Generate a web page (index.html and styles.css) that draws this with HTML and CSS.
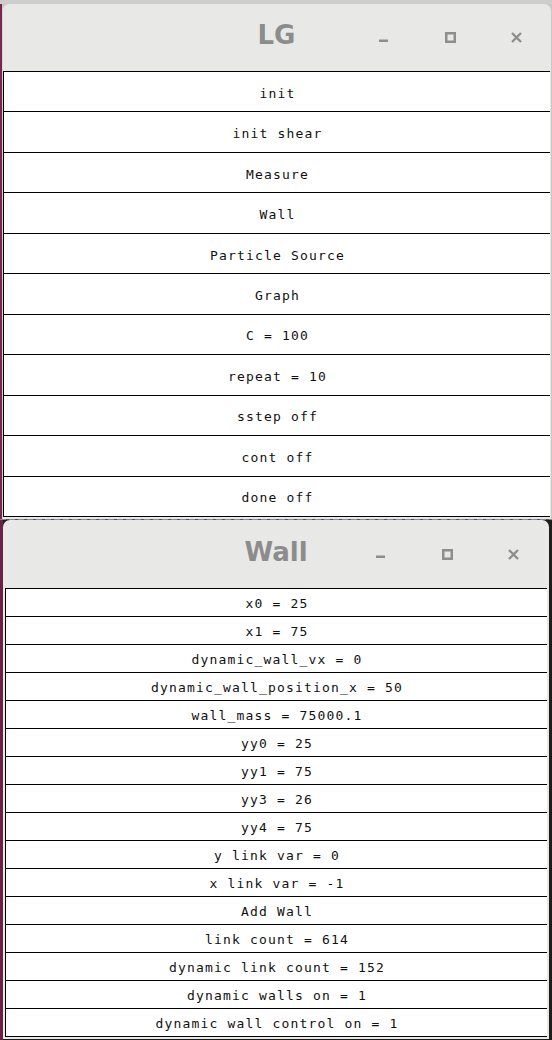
FILE: index.html
```html
<!DOCTYPE html>
<html>
<head>
<meta charset="utf-8">
<link rel="stylesheet" href="styles.css">
</head>
<body>
<div class="desktop">
  <div class="upper">
    <div class="window win-lg">
      <div class="titlebar">
        <div class="side"></div>
        <div class="title">LG</div>
        <div class="side controls">
          <span class="ctl"><svg width="10" height="10" viewBox="0 0 10 10"><rect x="0" y="6.5" width="9" height="2.5" fill="#8e8e8e"/></svg></span>
          <span class="ctl"><svg width="11" height="11" viewBox="0 0 11 11"><rect x="1.25" y="1.25" width="8.5" height="8.5" fill="none" stroke="#8e8e8e" stroke-width="2.5"/></svg></span>
          <span class="ctl"><svg width="11" height="11" viewBox="0 0 11 11"><path d="M1 1 L10 10 M10 1 L1 10" stroke="#8e8e8e" stroke-width="2.4" fill="none"/></svg></span>
        </div>
      </div>
      <div class="list list-lg">
        <div class="row">init</div>
        <div class="row">init shear</div>
        <div class="row">Measure</div>
        <div class="row">Wall</div>
        <div class="row">Particle Source</div>
        <div class="row">Graph</div>
        <div class="row">C = 100</div>
        <div class="row">repeat = 10</div>
        <div class="row">sstep off</div>
        <div class="row">cont off</div>
        <div class="row">done off</div>
      </div>
    </div>
  </div>
  <div class="lower">
    <div class="window win-wall">
      <div class="titlebar">
        <div class="side"></div>
        <div class="title">Wall</div>
        <div class="side controls">
          <span class="ctl"><svg width="10" height="10" viewBox="0 0 10 10"><rect x="0" y="6.5" width="9" height="2.5" fill="#8e8e8e"/></svg></span>
          <span class="ctl"><svg width="11" height="11" viewBox="0 0 11 11"><rect x="1.25" y="1.25" width="8.5" height="8.5" fill="none" stroke="#8e8e8e" stroke-width="2.5"/></svg></span>
          <span class="ctl"><svg width="11" height="11" viewBox="0 0 11 11"><path d="M1 1 L10 10 M10 1 L1 10" stroke="#8e8e8e" stroke-width="2.4" fill="none"/></svg></span>
        </div>
      </div>
      <div class="list list-wall">
        <div class="row">x0 = 25</div>
        <div class="row">x1 = 75</div>
        <div class="row">dynamic_wall_vx = 0</div>
        <div class="row">dynamic_wall_position_x = 50</div>
        <div class="row">wall_mass = 75000.1</div>
        <div class="row">yy0 = 25</div>
        <div class="row">yy1 = 75</div>
        <div class="row">yy3 = 26</div>
        <div class="row">yy4 = 75</div>
        <div class="row">y link var = 0</div>
        <div class="row">x link var = -1</div>
        <div class="row">Add Wall</div>
        <div class="row">link count = 614</div>
        <div class="row">dynamic link count = 152</div>
        <div class="row">dynamic walls on = 1</div>
        <div class="row">dynamic wall control on = 1</div>
      </div>
    </div>
  </div>
</div>
</body>
</html>
```

FILE: styles.css
```css
* { box-sizing: border-box; }
html, body { margin: 0; padding: 0; }
body { background: #1e1a1a; }

.desktop {
  width: 552px;
  height: 1040px;
  overflow: hidden;
  background: #7a2450;
}

.upper {
  padding: 4px 1px 0 2px;
  background: linear-gradient(#cdcdcb 0 4px, transparent 4px),
              linear-gradient(to right, #7a2450 0 2px, #c9c9c7 2px);
}

.window {
  background: #e8e8e7;
  border-radius: 7px 7px 0 0;
  display: flex;
  flex-direction: column;
}

.win-lg {
  width: 549px;
  height: 515px;
  padding: 0 1px 2px 1px;
  box-shadow: inset 1px 0 0 #d6d6d4;
}

.lower {
  height: 521px;
  padding: 1px 3px 0 3px;
  background:
    repeating-linear-gradient(to right, #8a8a8a 0 6px, #5b4a7a 6px 9px) top / 100% 1px no-repeat,
    linear-gradient(to right, #6e1f48 0 3px, #1f1c1c 3px);
}

.win-wall {
  width: 546px;
  height: 519px;
  padding: 0 2px 2px 2px;
}

.titlebar {
  height: 67px;
  flex: none;
  display: grid;
  grid-template-columns: 1fr auto 1fr;
  align-items: center;
}
.win-wall .titlebar { height: 68px; }

.title {
  font-family: "DejaVu Sans", sans-serif;
  font-weight: bold;
  font-size: 26px;
  color: #8c8c8c;
  padding-bottom: 5px;
}

.controls {
  display: flex;
  justify-content: flex-end;
  padding-right: 1px;
}

.ctl {
  width: 66px;
  display: flex;
  justify-content: center;
  align-items: center;
  height: 12px;
}
.ctl svg { display: block; }

.list {
  background: #fff;
  border-top: 1px solid #000;
  border-left: 1px solid #000;
  display: grid;
  flex: 1;
}

.list-lg { grid-template-rows: repeat(11, 1fr); }
.list-wall { grid-template-rows: repeat(16, 1fr); }

.row {
  border-bottom: 1px solid #000;
  display: flex;
  align-items: center;
  justify-content: center;
  font-family: "DejaVu Sans Mono", monospace;
  font-size: 13px;
  letter-spacing: 1.17px;
  color: #111;
  white-space: pre;
}

.list-lg .row { padding-top: 3px; padding-left: 1px; }
.list-wall .row { padding-top: 1px; padding-left: 1px; }
```
